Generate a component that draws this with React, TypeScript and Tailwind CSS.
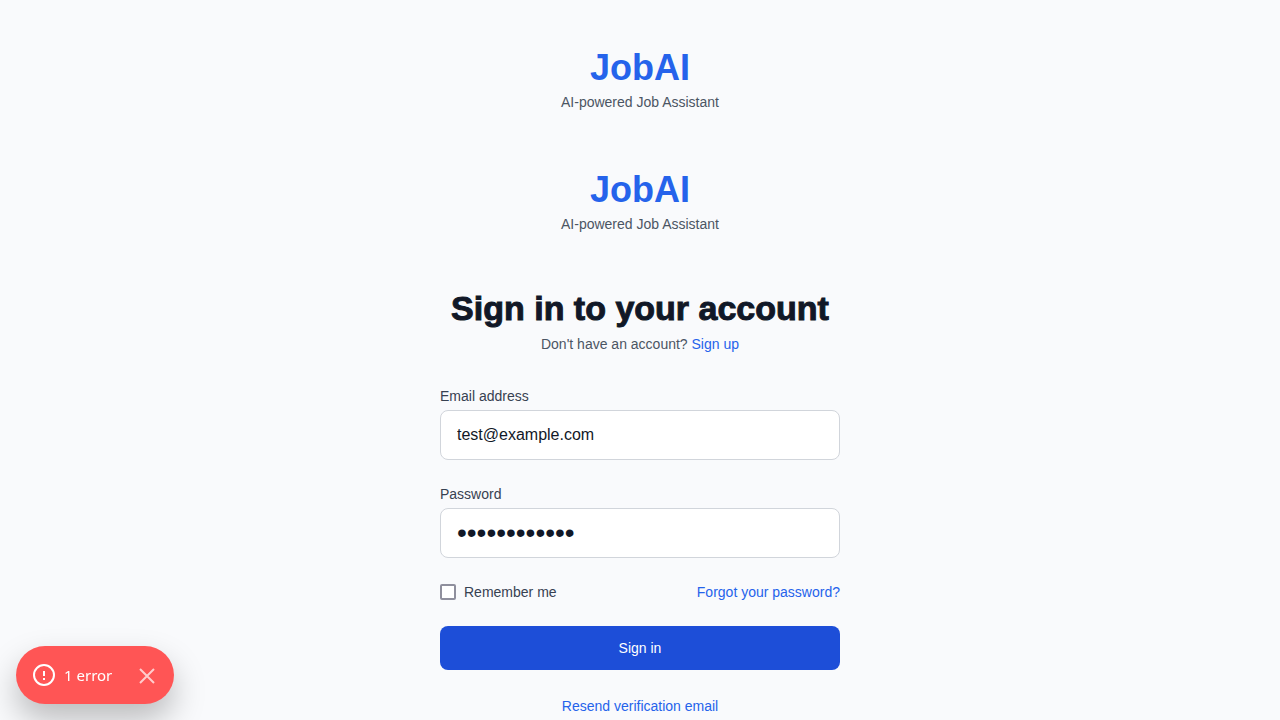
import { useState } from "react";

function Brand() {
  return (
    <div className="text-center">
      <p className="text-4xl leading-10 font-bold text-[#2563eb]">JobAI</p>
      <p className="mt-1 text-sm text-[#4b5563]">AI-powered Job Assistant</p>
    </div>
  );
}

interface FieldProps {
  id: string;
  label: string;
  type: "email" | "password";
  initial: string;
}

function Field({ id, label, type, initial }: FieldProps) {
  const [value, setValue] = useState(initial);
  const size = type === "password" ? "text-[28px]" : "text-base";
  return (
    <div>
      <label htmlFor={id} className="block text-sm text-[#374151]">
        {label}
      </label>
      <input
        id={id}
        type={type}
        value={value}
        onChange={(e) => setValue(e.target.value)}
        className={`mt-1 block h-[50px] w-full rounded-lg border border-[#d1d5db] bg-white px-4 text-[#111827] ${size}`}
      />
    </div>
  );
}

function ErrorToast({ onClose }: { onClose: () => void }) {
  return (
    <div
      role="status"
      className="fixed bottom-4 left-4 flex items-center rounded-full bg-[#ff5555] p-4 font-['Noto_Sans',sans-serif] text-[15px] leading-[26px] text-white shadow-[0_16px_32px_rgba(0,0,0,0.25)]"
    >
      <svg width="24" height="24" viewBox="0 0 24 24" fill="none" stroke="currentColor" strokeWidth="2" aria-hidden="true">
        <circle cx="12" cy="12" r="10" />
        <path d="M12 8v5M12 15v2" />
      </svg>
      <span className="ml-2">1 error</span>
      <button type="button" aria-label="Hide errors" onClick={onClose} className="ml-6 opacity-70">
        <svg width="22" height="24" viewBox="0 0 22 24" fill="none" stroke="currentColor" strokeWidth="2" aria-hidden="true">
          <path d="M18 6 4 20M4 6l14 14" />
        </svg>
      </button>
    </div>
  );
}

export default function App() {
  const [toast, setToast] = useState(true);
  return (
    <div className="min-h-screen bg-[#f9fafc] px-4 pt-12 pb-1 font-['Liberation_Sans',Arial,sans-serif] text-[#111827]">
      <main className="mx-auto max-w-[400px]">
        <Brand />
        <div className="mt-[58px]">
          <Brand />
        </div>
        <h1 className="mt-14 text-center text-[34px] leading-9 font-black [-webkit-text-stroke:1px]">
          Sign in to your account
        </h1>
        <p className="mt-2 text-center text-sm text-[#4b5563]">
          Don't have an account?{" "}
          <a href="#signup" className="text-[#2563eb]">
            Sign up
          </a>
        </p>
        <form className="mt-8 flex flex-col gap-6" onSubmit={(e) => e.preventDefault()}>
          <Field id="email" label="Email address" type="email" initial="test@example.com" />
          <Field id="password" label="Password" type="password" initial="password1234" />
          <div className="flex items-center justify-between text-sm">
            <div className="flex items-center gap-2">
              <input
                id="remember"
                type="checkbox"
                className="size-4 appearance-none rounded-xs border-2 border-[#8f8f9d] bg-white checked:bg-[#2563eb]"
              />
              <label htmlFor="remember" className="text-[#374151]">
                Remember me
              </label>
            </div>
            <a href="#forgot" className="text-[#2563eb]">
              Forgot your password?
            </a>
          </div>
          <button type="submit" className="h-11 rounded-lg bg-[#1d4ed8] text-sm text-white">
            Sign in
          </button>
          <a href="#verify" className="self-center text-sm leading-6 text-[#2563eb]">
            Resend verification email
          </a>
        </form>
      </main>
      {toast && <ErrorToast onClose={() => setToast(false)} />}
    </div>
  );
}
